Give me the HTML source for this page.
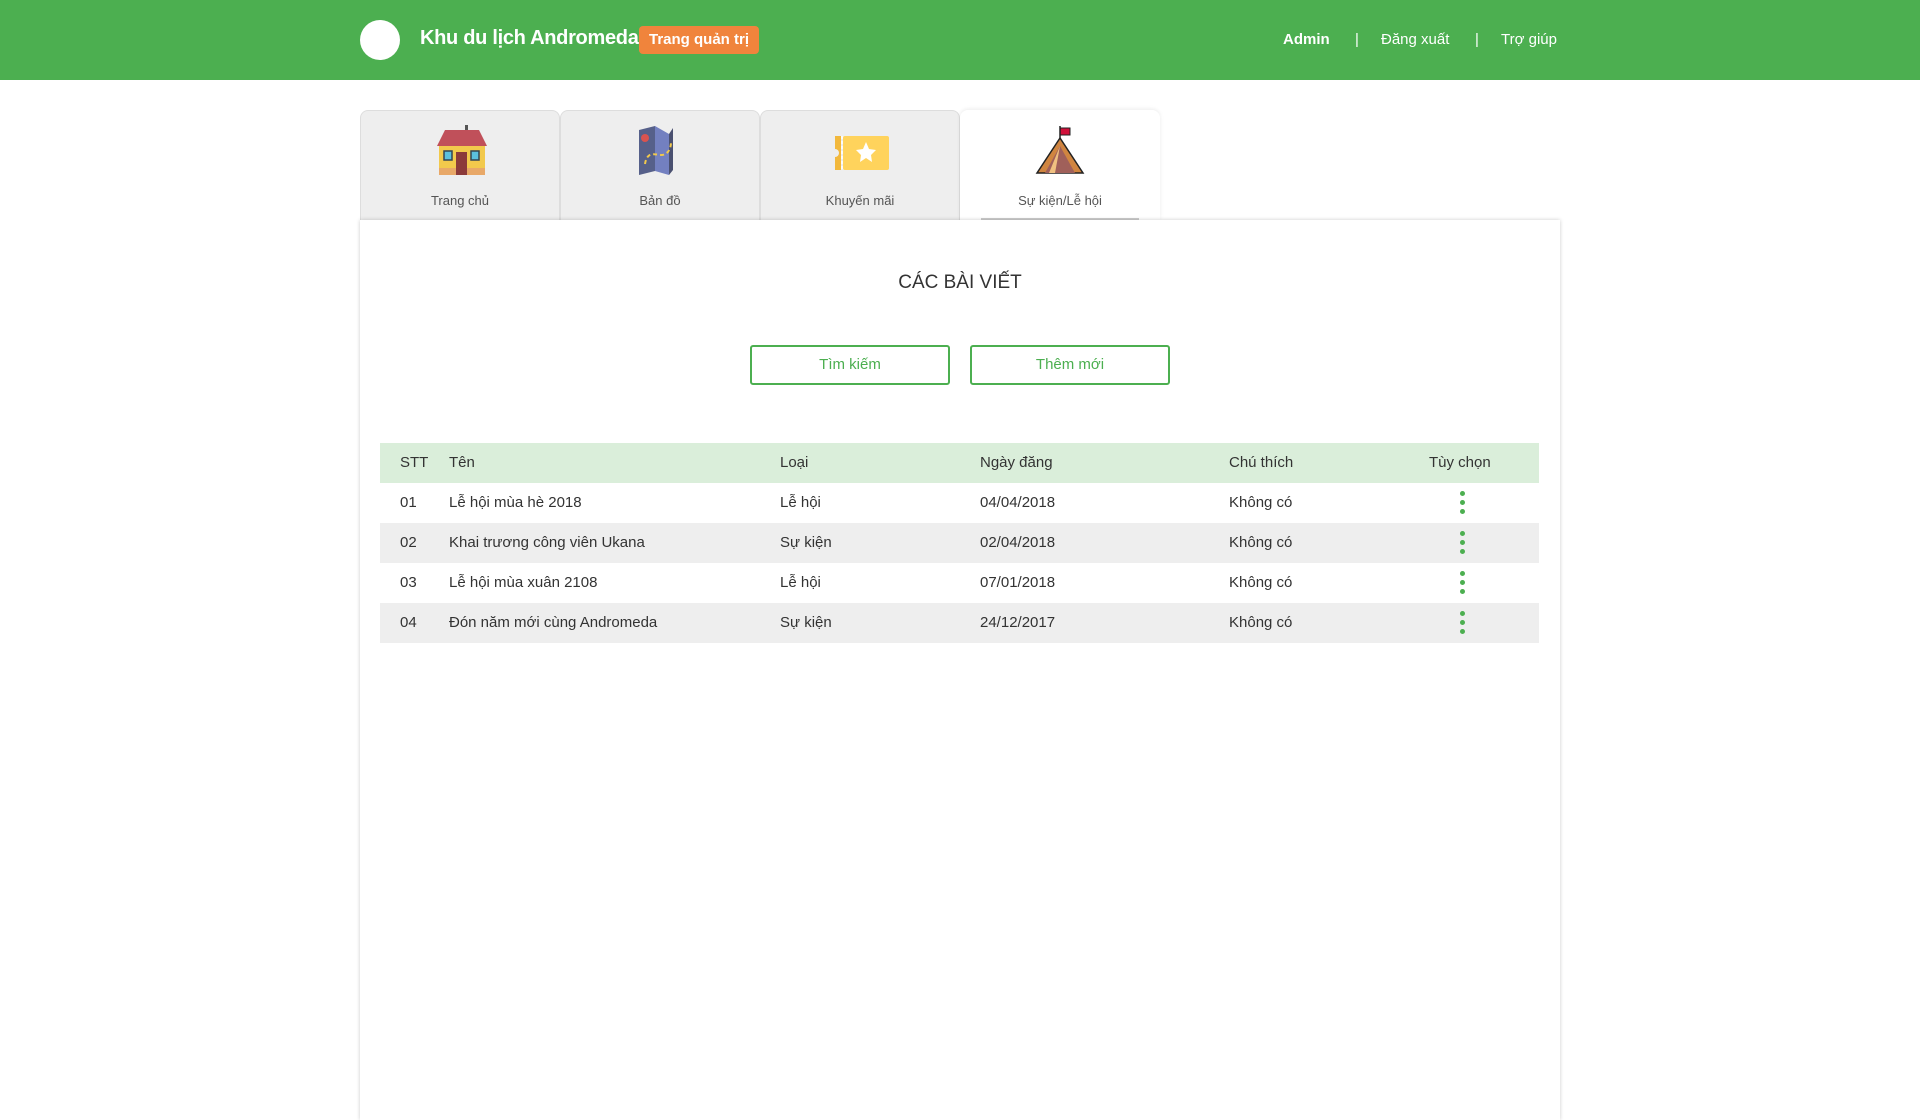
<!DOCTYPE html>
<html><head><meta charset="utf-8"><style>
*{margin:0;padding:0;box-sizing:border-box}
body{width:1920px;height:1080px;background:#fff;font-family:"Liberation Sans",sans-serif;overflow:hidden;position:relative;color:#333}
.hdr{position:absolute;left:0;top:0;width:1920px;height:80px;background:#4caf50}
.logo{position:absolute;left:360px;top:20px;width:40px;height:40px;border-radius:50%;background:#fff}
.title{position:absolute;left:420px;top:27px;color:#fff;font-weight:bold;font-size:20px;letter-spacing:-0.3px}
.badge{position:absolute;left:639px;top:26px;width:120px;height:28px;background:#f0843c;border-radius:4px;color:#fff;font-weight:bold;font-size:15px;line-height:28px;text-align:center}
.nav{position:absolute;top:31px;color:#fff;font-size:15px}
.tab{position:absolute;top:110px;width:200px;height:110px;background:#eee;border:1px solid #ddd;border-bottom:none;border-radius:8px 8px 0 0;text-align:center}
.tab svg{position:absolute;left:72px;top:13px}
.tab span{position:absolute;left:0;right:0;top:82px;font-size:13px;color:#555}
.tab.act{background:#fff;border-color:#fff;box-shadow:0 -1px 4px rgba(0,0,0,.08)}
.panel{position:absolute;left:360px;top:220px;width:1200px;height:900px;background:#fff;box-shadow:0 0 4px rgba(0,0,0,.2)}
.h{position:absolute;left:0;right:0;top:52px;text-align:center;font-size:19px;color:#333}
.btn{position:absolute;top:125px;width:200px;height:40px;border:2px solid #4caf50;border-radius:3px;color:#4caf50;font-size:15px;line-height:36px;text-align:center}
.row{position:absolute;left:20px;width:1159px;height:40px;font-size:15px;line-height:40px}
.row div{position:absolute;top:0}
.dots{width:5px}
.dots i{display:block;width:5px;height:5px;border-radius:50%;background:#4caf50;margin-bottom:4px}
</style></head><body>
<div class="hdr">
<div class="logo"></div>
<div class="title">Khu du lịch Andromeda</div>
<div class="badge">Trang quản trị</div>
<div class="nav" style="left:1283px;font-weight:bold">Admin</div>
<div class="nav" style="left:1355px">|</div>
<div class="nav" style="left:1381px">Đăng xuất</div>
<div class="nav" style="left:1475px">|</div>
<div class="nav" style="left:1501px">Trợ giúp</div>
</div>

<div class="tab" style="left:360px"><svg width="56" height="56" viewBox="0 0 56 56"><rect x="32" y="1" width="3" height="6" fill="#555"/><polygon points="4,22 12,6 46,6 54,22" fill="#c0505a"/><rect x="6" y="22" width="46" height="28" fill="#f2c94c"/><rect x="6" y="44" width="46" height="7" fill="#e8a868"/><rect x="23" y="28" width="11" height="23" fill="#8b3a3a"/><rect x="11" y="27" width="8" height="9" fill="#5bc0de" stroke="#345" stroke-width="1.5"/><rect x="38" y="27" width="8" height="9" fill="#5bc0de" stroke="#345" stroke-width="1.5"/></svg><span>Trang chủ</span></div>
<div class="tab" style="left:560px"><svg width="56" height="56" viewBox="0 0 56 56"><polygon points="6,6 22,2 22,47 6,51" fill="#56608a"/><polygon points="22,2 36,10 36,51 22,47" fill="#7380c0"/><polygon points="36,10 40,4 40,46 36,51" fill="#4a5070"/><circle cx="12" cy="14" r="4" fill="#d9534f"/><path d="M12 40 C14 28 20 30 28 31 C34 31 38 26 38 18" stroke="#f2c94c" stroke-width="2" stroke-dasharray="4 3" fill="none"/></svg><span>Bản đồ</span></div>
<div class="tab" style="left:760px"><svg width="56" height="56" viewBox="0 0 56 56"><rect x="2" y="12" width="6" height="34" fill="#f2b83c"/><rect x="10" y="12" width="46" height="34" rx="2" fill="#ffd35c"/><line x1="9" y1="12" x2="9" y2="46" stroke="#fff" stroke-width="1.5" stroke-dasharray="3 2"/><circle cx="2" cy="29" r="4" fill="#eee"/><polygon points="33,18 36,25 43,26 38,31 39,38 33,34 27,38 28,31 23,26 30,25" fill="#fff"/></svg><span>Khuyến mãi</span></div>
<div class="tab act" style="left:960px"><svg width="56" height="56" viewBox="0 0 56 56"><rect x="27" y="4" width="10" height="7" fill="#d0103a" stroke="#222" stroke-width="1"/><line x1="27" y1="2" x2="27" y2="16" stroke="#222" stroke-width="1.5"/><polygon points="27,14 4,49 50,49" fill="#d08540" stroke="#222" stroke-width="1.5"/><polygon points="27,22 12,49 42,49" fill="#a0605a"/><polygon points="27,22 16,49 22,49" fill="#f0c080"/></svg><span>Sự kiện/Lễ hội</span><div style="position:absolute;left:20px;right:20px;bottom:0;height:2px;background:#ccc"></div></div>

<div class="panel">
<div class="h">CÁC BÀI VIẾT</div>
<div class="btn" style="left:390px">Tìm kiếm</div>
<div class="btn" style="left:610px">Thêm mới</div>

<div class="row" style="top:223px;background:#daeeda"><div style="left:20px">STT</div><div style="left:69px">Tên</div><div style="left:400px">Loại</div><div style="left:600px">Ngày đăng</div><div style="left:849px">Chú thích</div><div style="left:1049px">Tùy chọn</div></div>
<div class="row" style="top:263px"><div style="left:20px">01</div><div style="left:69px">Lễ hội mùa hè 2018</div><div style="left:400px">Lễ hội</div><div style="left:600px">04/04/2018</div><div style="left:849px">Không có</div><div class="dots" style="left:1080px;top:8px"><i></i><i></i><i></i></div></div>
<div class="row" style="top:303px;background:#eee"><div style="left:20px">02</div><div style="left:69px">Khai trương công viên Ukana</div><div style="left:400px">Sự kiện</div><div style="left:600px">02/04/2018</div><div style="left:849px">Không có</div><div class="dots" style="left:1080px;top:8px"><i></i><i></i><i></i></div></div>
<div class="row" style="top:343px"><div style="left:20px">03</div><div style="left:69px">Lễ hội mùa xuân 2108</div><div style="left:400px">Lễ hội</div><div style="left:600px">07/01/2018</div><div style="left:849px">Không có</div><div class="dots" style="left:1080px;top:8px"><i></i><i></i><i></i></div></div>
<div class="row" style="top:383px;background:#eee"><div style="left:20px">04</div><div style="left:69px">Đón năm mới cùng Andromeda</div><div style="left:400px">Sự kiện</div><div style="left:600px">24/12/2017</div><div style="left:849px">Không có</div><div class="dots" style="left:1080px;top:8px"><i></i><i></i><i></i></div></div>
</div>
</body></html>
